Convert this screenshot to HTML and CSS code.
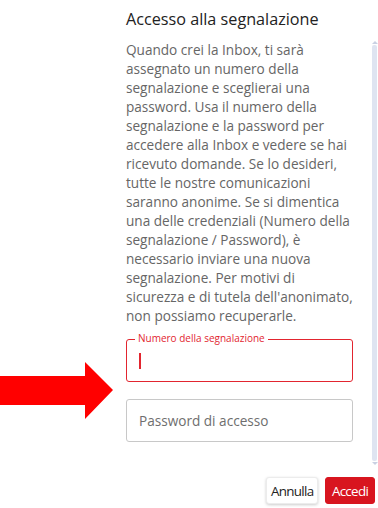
FILE: index.html
```html
<!DOCTYPE html>
<html lang="it">
<head>
<meta charset="utf-8">
<link rel="stylesheet" href="styles.css">
</head>
<body>
<div class="page">
  <div class="main">
    <div class="content">
      <h2 class="title">Accesso alla segnalazione</h2>
      <p class="desc">Quando crei la Inbox, ti sarà assegnato un numero della segnalazione e sceglierai una password. Usa il numero della segnalazione e la password per accedere alla Inbox e vedere se hai ricevuto domande. Se lo desideri, tutte le nostre comunicazioni saranno anonime. Se si dimentica una delle credenziali (Numero della segnalazione / Password), è necessario inviare una nuova segnalazione. Per motivi di sicurezza e di tutela dell'anonimato, non possiamo recuperarle.</p>
      <div class="field focused">
        <span class="legend">Numero della segnalazione</span>
        <span class="caret"></span>
      </div>
      <div class="field">
        <span class="placeholder">Password di accesso</span>
      </div>
    </div>
    <div class="scrollbar">
      <span class="sb-arrow up"></span>
      <div class="thumb"></div>
      <span class="sb-arrow down"></span>
    </div>
  </div>
  <div class="footer">
    <button class="btn btn-light">Annulla</button>
    <button class="btn btn-red">Accedi</button>
  </div>
  <svg class="arrow" width="114" height="58" viewBox="0 0 114 58">
    <polygon points="0,14 85,14 85,0 113,28 85,57 85,43 0,43" fill="#ff0000"/>
  </svg>
</div>
</body>
</html>
```
FILE: styles.css
```css
html, body {
  margin: 0;
  padding: 0;
  background: #ffffff;
}
body {
  font-family: "Open Sans", "Liberation Sans", sans-serif;
  width: 378px;
  height: 508px;
  overflow: hidden;
}
.page {
  position: relative;
  width: 378px;
  height: 508px;
}
.main {
  display: flex;
  height: 470px;
}
.content {
  width: 227px;
  margin-left: 126px;
}
.title {
  margin: 7px 0 0 0;
  font-size: 16.2px;
  font-weight: 400;
  color: #222;
  line-height: 24px;
}
.desc {
  margin: 9px 0 0 0;
  font-size: 13.6px;
  line-height: 19px;
  color: #666;
}
.field {
  position: relative;
  box-sizing: border-box;
  height: 43px;
  border: 1px solid #c8c8c8;
  border-radius: 3px;
  display: flex;
  align-items: center;
  padding-left: 12px;
}
.field.focused {
  margin-top: 14px;
  border: 1.5px solid #e2252f;
}
.field + .field {
  margin-top: 17px;
}
.legend {
  position: absolute;
  top: -8px;
  left: 8px;
  padding: 0 3px;
  background: #fff;
  font-size: 10px;
  line-height: 13px;
  color: #e2252f;
}
.caret {
  width: 1.5px;
  height: 16px;
  background: #e2252f;
}
.placeholder {
  font-size: 13.6px;
  color: #6e6e6e;
}
.scrollbar {
  margin-left: 18px;
  margin-top: 41px;
  width: 7px;
  height: 424px;
  display: flex;
  flex-direction: column;
  align-items: center;
  gap: 1px;
}
.sb-arrow {
  width: 0;
  height: 0;
  border-left: 3px solid transparent;
  border-right: 3px solid transparent;
}
.sb-arrow.up {
  border-bottom: 3px solid #c9d0e2;
}
.sb-arrow.down {
  border-top: 3px solid #c9d0e2;
}
.thumb {
  width: 5px;
  flex: 1;
  background: #dfe4f1;
  border-radius: 2px;
}
.footer {
  display: flex;
  justify-content: flex-end;
  gap: 7px;
  padding-right: 3px;
  margin-top: 7px;
}
.btn {
  height: 27px;
  border-radius: 3px;
  font-family: "Open Sans", "Liberation Sans", sans-serif;
  font-size: 13.4px;
  letter-spacing: -0.7px;
  padding: 0 4px;
  cursor: pointer;
}
.btn-light {
  background: #fff;
  border: 1px solid #ececec;
  box-shadow: 0 1px 3px rgba(0,0,0,0.2);
  color: #222;
  width: 52px;
}
.btn-red {
  background: #d8151f;
  border: 1px solid #d8151f;
  color: #fff;
  width: 50px;
}
.arrow {
  position: absolute;
  left: 0;
  top: 362px;
}
```
